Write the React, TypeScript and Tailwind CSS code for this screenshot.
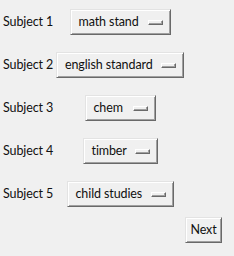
import React from 'react';

type Row = { label: string; value: string; width: string };

const rows: Row[] = [
  { label: 'Subject 1', value: 'math stand', width: 'w-[101px]' },
  { label: 'Subject 2', value: 'english standard', width: 'w-[128px]' },
  { label: 'Subject 3', value: 'chem', width: 'w-[71px]' },
  { label: 'Subject 4', value: 'timber', width: 'w-[75px]' },
  { label: 'Subject 5', value: 'child studies', width: 'w-[107px]' },
];

const raised =
  'border border-t-[#e3e3e3] border-l-[#e3e3e3] border-r-[#696969] border-b-[#696969] shadow-[inset_1px_1px_0_#ffffff,inset_-1px_-1px_0_#a0a0a0] bg-[#f0f0f0]';

const OptionMenu: React.FC<{ value: string; width: string }> = ({ value, width }) => (
  <div className={`${width} h-[26px] flex items-center justify-between pl-[8px] pr-[7px] ${raised}`}>
    <span className="whitespace-nowrap">{value}</span>
    <span className="w-[15px] h-[5px] border border-t-white border-l-white border-r-[#696969] border-b-[#696969] shadow-[inset_-1px_-1px_0_#a0a0a0]" />
  </div>
);

const App: React.FC = () => {
  return (
    <div
      className="w-[234px] h-[256px] bg-[#f0f0f0] text-[#111] text-[12.5px] tracking-[-0.1px] pt-[9px]"
      style={{ fontFamily: 'Lato, "Noto Sans", sans-serif' }}
    >
      <div className="flex flex-col gap-[17px]">
        {rows.map((r) => (
          <div key={r.label} className="flex items-center h-[26px]">
            <div className="w-[56px] pl-[3px] whitespace-nowrap">{r.label}</div>
            <div className="w-[128px] flex justify-center">
              <OptionMenu value={r.value} width={r.width} />
            </div>
          </div>
        ))}
      </div>
      <div className="flex justify-end pr-[12px] mt-[10px]">
        <button className={`w-[37px] h-[26px] flex items-center justify-center ${raised}`}>Next</button>
      </div>
    </div>
  );
};

export default App;
